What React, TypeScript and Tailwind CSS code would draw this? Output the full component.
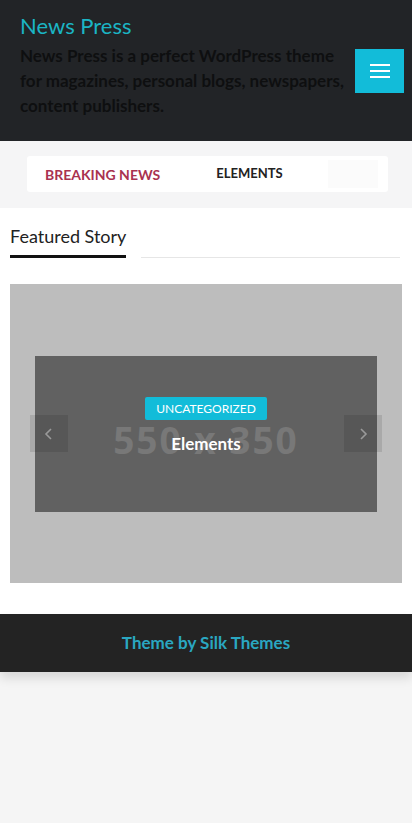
import React from "react";

export default function App() {
  return (
    <div className="min-h-[823px] w-[412px] bg-[#f5f5f5]" style={{ fontFamily: "Lato, 'Noto Sans', sans-serif" }}>
      {/* Header */}
      <header className="flex h-[141px] items-start justify-between bg-[#222427] pl-5 pr-2 pt-[11px]">
        <div className="w-[334px]">
          <div className="text-[22px] leading-[30px] text-[#1bb5c4]">News Press</div>
          <p className="mt-[2px] whitespace-nowrap text-[17px] font-bold leading-[25px] text-[#0e0f10]">
            News Press is a perfect WordPress theme
            <br />
            for magazines, personal blogs, newspapers,
            <br />
            content publishers.
          </p>
        </div>
        <button className="mt-[38px] flex h-[44px] w-[49px] flex-col items-center justify-center gap-[4px] bg-[#12bcd9]">
          <span className="block h-[2px] w-[20px] bg-white" />
          <span className="block h-[2px] w-[20px] bg-white" />
          <span className="block h-[2px] w-[20px] bg-white" />
        </button>
      </header>

      {/* Nav */}
      <nav className="flex h-[67px] items-start bg-[#f5f5f6] pl-[27px] pt-[15px]">
        <div className="flex h-[36px] w-[361px] items-center rounded-[3px] bg-white">
          <span className="ml-[18px] text-[14px] font-bold uppercase text-[#a9324f]">Breaking News</span>
          <span className="ml-[56px] text-[13px] font-bold uppercase text-[#222]">Elements</span>
          <span className="ml-auto mr-[10px] h-[28px] w-[50px] bg-[#fbfbfb]" />
        </div>
      </nav>

      {/* Main */}
      <main className="bg-white px-[10px] pb-[31px] pt-[16px]">
        <div className="flex items-end">
          <div className="border-b-[3px] border-[#111] pb-[7px]">
            <h2 className="text-[18px] leading-[24px] text-[#222]">Featured Story</h2>
          </div>
          <div className="mb-0 ml-[15px] mr-[2px] h-px flex-1 bg-[#e6e6e6]" />
        </div>

        <div className="relative mt-[26px] flex h-[299px] w-[392px] items-center justify-center bg-[#bdbdbd]">
          <div className="relative flex h-[156px] w-[342px] items-center justify-center bg-[#616161]">
            <span className="mt-[12px] text-[37px] font-bold tracking-[2px] text-[#787878]" style={{ fontFamily: "'Open Sans', sans-serif" }}>550 x 350</span>
          </div>
          <div className="absolute inset-0 flex flex-col items-center justify-center pb-[13px]">
            <span className="flex h-[23px] items-center rounded-[2px] bg-[#12bcd9] px-[11px] text-[12px] text-white">UNCATEGORIZED</span>
            <span className="mt-[11px] text-[17px] font-bold text-white">Elements</span>
          </div>
          <button className="absolute left-[20px] top-[131px] flex h-[37px] w-[38px] items-center justify-center bg-black/10">
            <svg width="14" height="14" viewBox="0 0 14 14" fill="none" stroke="#9a9a9a" strokeWidth="1.6">
              <path d="M9 2 L4 7 L9 12" />
            </svg>
          </button>
          <button className="absolute left-[334px] top-[131px] flex h-[37px] w-[38px] items-center justify-center bg-black/10">
            <svg width="14" height="14" viewBox="0 0 14 14" fill="none" stroke="#9a9a9a" strokeWidth="1.6">
              <path d="M5 2 L10 7 L5 12" />
            </svg>
          </button>
        </div>
      </main>

      {/* Footer */}
      <footer className="flex h-[58px] items-center justify-center bg-[#232323] shadow-[0_6px_10px_rgba(0,0,0,0.12)]">
        <span className="text-[17px] font-bold text-[#2aa7c1]">Theme by Silk Themes</span>
      </footer>
    </div>
  );
}
